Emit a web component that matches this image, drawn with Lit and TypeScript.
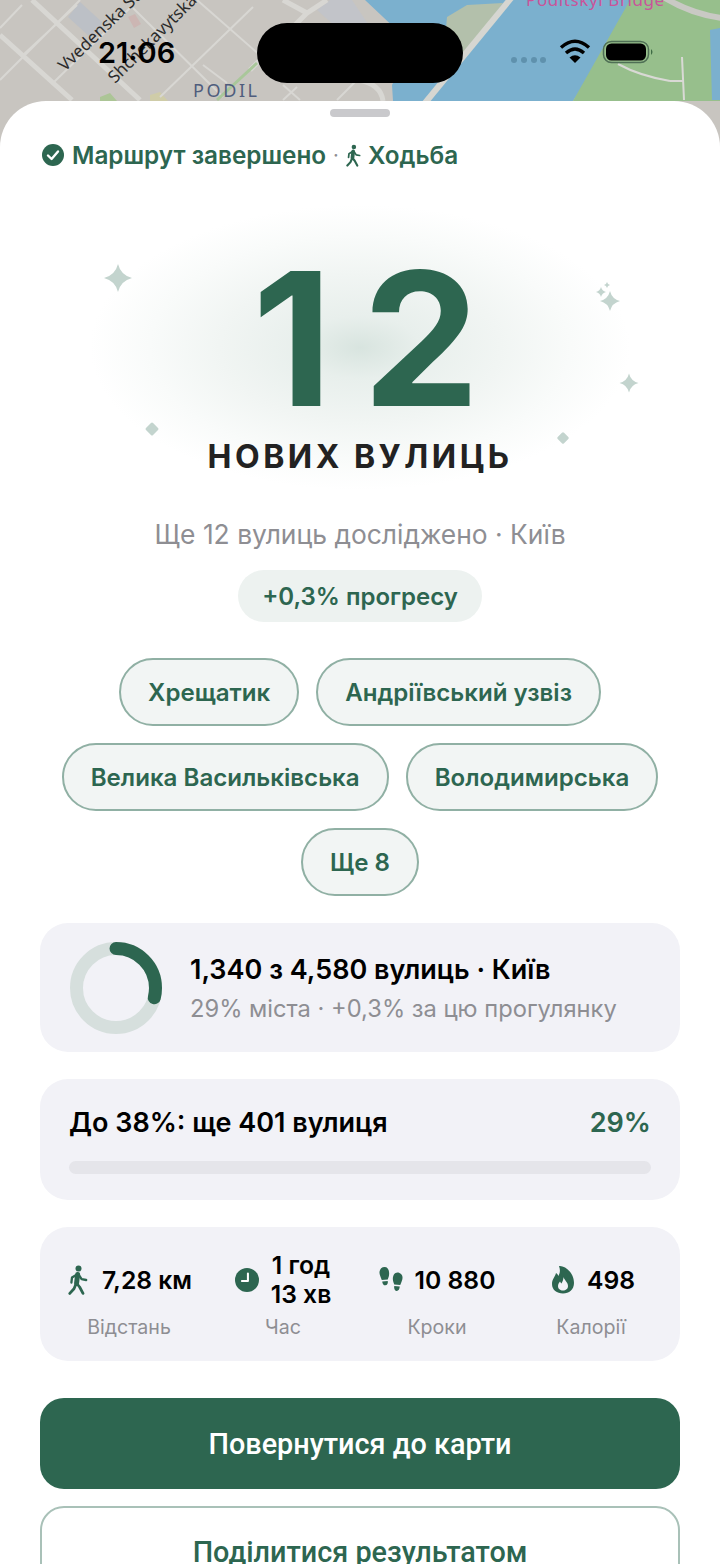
import {LitElement, html, css, svg} from 'lit';
import {customElement} from 'lit/decorators.js';

const GREEN = '#2d6650';

const sparkle = (x: number, y: number, r: number) => {
    const a = r * 0.2;
    return svg`<path d="M${x} ${y - r}Q${x + a} ${y - a} ${x + r} ${y}Q${x + a} ${y + a} ${x} ${y + r}Q${x - a} ${y + a} ${x - r} ${y}Q${x - a} ${y - a} ${x} ${y - r}Z"/>`;
};

const walkIcon = (cls: string) => html`
    <svg class=${cls} viewBox="0 0 20 30" fill="none" stroke=${GREEN} stroke-linecap="round" stroke-linejoin="round">
        <circle cx="10.5" cy="3.6" r="3" fill=${GREEN} stroke="none"/>
        <path d="M9.6 9.5 8.6 18" stroke-width="5"/>
        <path d="M8.2 10 4 12.6 3.4 17.5M11 10.2l2.6 4 4.6 .8" stroke-width="2.3"/>
        <path d="M8.4 18 11.6 22 15 28.4M8 19 6 23.8 1.8 28.4" stroke-width="2.8"/>
    </svg>`;

@customElement('app-root')
export class AppRoot extends LitElement {
    static styles = css`
        :host {
            display: block;
            font-family: Inter, "Noto Sans", sans-serif;
            --green: #2d6650;
        }
        .page {
            position: relative;
            width: 720px;
            height: 1564px;
            overflow: hidden;
            background: #fff;
        }
        .map {
            position: absolute;
            left: 0;
            top: 0;
            width: 720px;
            height: 150px;
        }
        .status {
            position: absolute;
            left: 0;
            top: 0;
            width: 720px;
            height: 100px;
        }
        .time {
            position: absolute;
            left: 98px;
            top: 36px;
            font-size: 29px;
            line-height: 34px;
            font-weight: 600;
            color: #000;
        }
        .island {
            position: absolute;
            left: 257px;
            top: 23px;
            width: 206px;
            height: 60px;
            border-radius: 30px;
            background: #000;
        }
        .status-icons {
            position: absolute;
            left: 508px;
            top: 38px;
        }
        .sheet {
            position: absolute;
            left: 0;
            top: 101px;
            width: 720px;
            height: 1463px;
            box-sizing: border-box;
            background: #fff;
            border-radius: 46px 46px 0 0;
            padding: 8px 40px 0;
            display: flex;
            flex-direction: column;
        }
        .handle {
            align-self: center;
            flex: none;
            width: 60px;
            height: 8px;
            border-radius: 4px;
            background: #c9c9cc;
        }
        .route {
            margin-top: 22px;
            height: 32px;
            flex: none;
            display: flex;
            align-items: center;
            font-size: 24.3px;
            font-weight: 600;
            color: var(--green);
            white-space: nowrap;
        }
        .check {
            width: 22px;
            height: 22px;
            margin: 0 8px 0 2px;
        }
        .sep {
            margin: 0 7px;
            color: #8e8e93;
            font-weight: 400;
            font-size: 20px;
        }
        .walk-small {
            width: 15px;
            height: 23px;
            margin-right: 7px;
            stroke-width: 1;
        }
        .hero {
            position: relative;
            height: 274px;
            flex: none;
            margin: 44px -40px 0;
            display: flex;
            flex-direction: column;
            align-items: center;
        }
        .glow {
            position: absolute;
            left: 90px;
            top: -10px;
            width: 540px;
            height: 285px;
            background: radial-gradient(closest-side, #d8e4df 0%, #e8efec 22%, #f1f5f3 52%, #f9fbfa 78%, #fff 100%);
        }
        .sparkles {
            position: absolute;
            left: 0;
            top: 0;
            width: 720px;
            height: 274px;
            fill: #c3d4ce;
        }
        .count {
            position: relative;
            margin: 31px -42px 0 0;
            font-size: 186px;
            line-height: 186px;
            font-weight: 700;
            letter-spacing: 30px;
            color: var(--green);
        }
        .count-label {
            position: relative;
            margin-top: 5px;
            font-size: 32px;
            line-height: 40px;
            font-weight: 700;
            letter-spacing: 3.5px;
            color: #222;
        }
        .summary {
            margin-top: 29px;
            flex: none;
            text-align: center;
            font-size: 26.4px;
            line-height: 32px;
            color: #8e8e93;
        }
        .progress-pill {
            align-self: center;
            flex: none;
            margin-top: 20px;
            height: 52px;
            padding: 0 24px;
            display: flex;
            align-items: center;
            border-radius: 26px;
            background: #edf2f0;
            color: var(--green);
            font-size: 24px;
            font-weight: 600;
        }
        .chips {
            margin: 36px -10px 0;
            flex: none;
            display: flex;
            flex-wrap: wrap;
            justify-content: center;
            gap: 17px;
        }
        .chip {
            height: 68px;
            box-sizing: border-box;
            padding: 0 27px;
            display: flex;
            align-items: center;
            border: 2px solid #90b0a4;
            border-radius: 34px;
            background: #f2f5f4;
            color: var(--green);
            font-size: 24.1px;
            font-weight: 600;
        }
        .card {
            background: #f2f2f7;
            border-radius: 28px;
            box-sizing: border-box;
            flex: none;
        }
        .city {
            margin-top: 27px;
            height: 129px;
            padding: 0 30px;
            display: flex;
            align-items: center;
            gap: 28px;
        }
        .ring {
            width: 92px;
            height: 92px;
            flex: none;
        }
        .city-text {
            padding-top: 2px;
        }
        .city-title {
            font-size: 27px;
            line-height: 32px;
            font-weight: 600;
            color: #000;
            white-space: nowrap;
        }
        .city-sub {
            margin-top: 8px;
            font-size: 23.7px;
            line-height: 30px;
            color: #8e8e93;
            white-space: nowrap;
        }
        .next {
            margin-top: 27px;
            height: 121px;
            padding: 27px 29px 0;
        }
        .next-row {
            display: flex;
            justify-content: space-between;
            align-items: center;
            height: 32px;
            font-size: 27px;
            font-weight: 600;
            color: #000;
        }
        .next-pct {
            color: var(--green);
            font-size: 27px;
            font-weight: 600;
        }
        .bar {
            margin-top: 23px;
            height: 13px;
            border-radius: 7px;
            background: #e5e5ea;
        }
        .stats {
            margin-top: 27px;
            height: 134px;
            padding: 0 12px;
            display: grid;
            grid-template-columns: repeat(4, 1fr);
        }
        .stat {
            display: grid;
            grid-template-rows: 60px 32px;
            padding-top: 23px;
            justify-items: center;
            row-gap: 1px;
        }
        .stat-top {
            display: flex;
            align-items: center;
            gap: 12px;
            font-size: 24.7px;
            line-height: 29px;
            font-weight: 600;
            color: #000;
            text-align: center;
            white-space: nowrap;
        }
        .stat:last-child .stat-top {
            margin-left: 4px;
        }
        .stat-icon {
            width: 24px;
            height: 30px;
            flex: none;
            stroke-width: 1.3;
        }
        .stat-label {
            font-size: 19.6px;
            line-height: 32px;
            color: #8e8e93;
        }
        .primary, .secondary {
            height: 91px;
            box-sizing: border-box;
            flex: none;
            display: flex;
            align-items: center;
            justify-content: center;
            border-radius: 24px;
            font-family: Roboto, Inter, sans-serif;
            font-size: 28.8px;
            font-weight: 500;
        }
        .primary {
            margin-top: 37px;
            background: var(--green);
            color: #fff;
        }
        .secondary {
            margin-top: 17px;
            border: 2px solid #a9c1b8;
            color: var(--green);
            background: #fff;
        }
    `;

    streets = ['Хрещатик', 'Андріївський узвіз', 'Велика Васильківська', 'Володимирська', 'Ще 8'];

    renderMap() {
        return html`
        <svg class="map" viewBox="0 0 720 150">
            <rect width="720" height="150" fill="#c8c5c0"/>
            <path d="M68 17 80 2 103 23 90 37Z" fill="#bcc0c6"/>
            <path d="M128 17l7-3 6 10-7 4Z" fill="#ccb6b3"/>
            <path d="M100 97l10-4 7 8H100Z" fill="#acc596"/>
            <path d="M150 95l10-3 8 9H150Z" fill="#cfcca8"/>
            <path d="M317 10 330 0H352L372 30 345 35Z" fill="#c2c4c9"/>
            <g fill="none" stroke="#d8d7d3" stroke-width="2">
                <path d="M0 28 22 5M0 80 80 0M23 55 77 5M53 83 130 8M160 97 253 7"/>
                <path d="M133 8 223 97M197 0 262 57M203 65 227 83"/>
                <path d="M283 85 300 100M283 100 297 87M337 100 357 80"/>
            </g>
            <g fill="none" stroke="#d8d7d3" stroke-width="5">
                <path d="M32 0 140 100M0 35 72 100M283 0 307 13 327 0M307 13 250 70"/>
                <path d="M358 80Q381 84 383 101"/>
            </g>
            <path d="M217 100 257 63" stroke="#a9c79a" stroke-width="3"/>
            <path d="M365 0H640L573 101H393L392 85 410 50 400 33Z" fill="#7bb0ce"/>
            <path d="M447 17 467 5 503 3 463 57 445 40Z" fill="#b3c0ab"/>
            <path d="M512 -3 425 103" stroke="#d6d6d1" stroke-width="6"/>
            <path d="M630 0H720V101H573Z" fill="#97bf8c"/>
            <path d="M710 30 720 28V100H712Z" fill="#7bb0ce"/>
            <path d="M660 -5Q690 14 722 18" fill="none" stroke="#c9c9c4" stroke-width="6"/>
            <path d="M618 64Q640 76 670 81M682 57 684 100M670 81H684" fill="none" stroke="#d9d9d5" stroke-width="2"/>
            <text x="526" y="6" font-size="17" font-family="Noto Sans, sans-serif" fill="#c9549a" letter-spacing=".6">Poditskyi Bridge</text>
            <text x="193" y="97" font-size="18" font-family="Noto Sans, sans-serif" fill="#4f5d7d" letter-spacing="2.6">PODIL</text>
            <text transform="translate(65 72) rotate(-44)" font-size="17" font-family="Noto Sans, sans-serif" fill="#2b2b2b">Vvedenska St</text>
            <text transform="translate(115 84) rotate(-45)" font-size="17" font-family="Noto Sans, sans-serif" fill="#2b2b2b">Shchekavytska</text>
        </svg>`;
    }

    renderStatus() {
        return html`
        <div class="status">
            <div class="time">21:06</div>
            <div class="island"></div>
            <svg class="status-icons" width="150" height="30" viewBox="0 0 150 30">
                <g fill="#5f91ad">
                    <circle cx="6" cy="22" r="3"/><circle cx="16" cy="22" r="3"/>
                    <circle cx="26" cy="22" r="3"/><circle cx="35" cy="22" r="3"/>
                </g>
                <g fill="none" stroke="#000" stroke-width="3.4">
                    <path d="M53 9.500Q67 -3 81 9.500"/>
                    <path d="M58 15Q67 7 76 15"/>
                </g>
                <path d="M67 25 61.500 19.500Q67 15 72.500 19.500Z" fill="#000"/>
                <rect x="95.500" y="3.500" width="45" height="21" rx="8" fill="none" stroke="#4f6f55" stroke-width="1.5"/>
                <rect x="98" y="5.500" width="40" height="17" rx="5.500" fill="#000"/>
                <path d="M143 11q3 3 0 6Z" fill="#3f6b45"/>
            </svg>
        </div>`;
    }

    render() {
        return html`
        <div class="page">
            ${this.renderMap()}
            ${this.renderStatus()}
            <div class="sheet">
                <div class="handle"></div>
                <div class="route">
                    <svg class="check" viewBox="0 0 22 22">
                        <circle cx="11" cy="11" r="11" fill=${GREEN}/>
                        <path d="M6 11.500 9.600 15 16 7.500" fill="none" stroke="#fff" stroke-width="2.4" stroke-linecap="round" stroke-linejoin="round"/>
                    </svg>
                    Маршрут завершено<span class="sep">·</span>${walkIcon('walk-small')}Ходьба
                </div>
                <div class="hero">
                    <div class="glow"></div>
                    <svg class="sparkles" viewBox="0 0 720 274">
                        ${sparkle(118, 63, 14)}
                        ${sparkle(610, 86, 10)}
                        ${sparkle(601, 77, 5)}
                        ${sparkle(607, 70, 3)}
                        ${sparkle(629, 168, 9.5)}
                        <rect x="-5" y="-5" width="10" height="10" rx="1.5" transform="translate(152 214) rotate(45)"/>
                        <rect x="-4.500" y="-4.500" width="9" height="9" rx="1.5" transform="translate(563 223) rotate(45)"/>
                    </svg>
                    <div class="count">12</div>
                    <div class="count-label">НОВИХ ВУЛИЦЬ</div>
                </div>
                <div class="summary">Ще 12 вулиць досліджено · Київ</div>
                <div class="progress-pill">+0,3% прогресу</div>
                <div class="chips">
                    ${this.streets.map(s => html`<div class="chip">${s}</div>`)}
                </div>
                <div class="card city">
                    <svg class="ring" viewBox="0 0 92 92">
                        <circle cx="46" cy="46" r="39.5" fill="none" stroke="#d6dfdd" stroke-width="13"/>
                        <circle cx="46" cy="46" r="39.5" fill="none" stroke=${GREEN} stroke-width="13" stroke-linecap="round"
                            pathLength="100" stroke-dasharray="29 100" transform="rotate(-90 46 46)"/>
                    </svg>
                    <div class="city-text">
                        <div class="city-title">1,340 з 4,580 вулиць · Київ</div>
                        <div class="city-sub">29% міста · +0,3% за цю прогулянку</div>
                    </div>
                </div>
                <div class="card next">
                    <div class="next-row"><span>До 38%: ще 401 вулиця</span><span class="next-pct">29%</span></div>
                    <div class="bar"></div>
                </div>
                <div class="card stats">
                    <div class="stat">
                        <div class="stat-top">${walkIcon('stat-icon')}<span>7,28 км</span></div>
                        <div class="stat-label">Відстань</div>
                    </div>
                    <div class="stat">
                        <div class="stat-top">
                            <svg class="stat-icon" viewBox="0 0 26 30">
                                <circle cx="13" cy="15" r="13" fill=${GREEN}/>
                                <path d="M14 8v8H7.500" fill="none" stroke="#fff" stroke-width="2.2" stroke-linecap="round" stroke-linejoin="round"/>
                            </svg>
                            <span>1 год<br>13 хв</span>
                        </div>
                        <div class="stat-label">Час</div>
                    </div>
                    <div class="stat">
                        <div class="stat-top">
                            <svg class="stat-icon" viewBox="0 0 26 30" fill=${GREEN}>
                                <path d="M6 1C9.500 1 11 4 11 8c0 3-1 5-1.500 6.500L3 15C2 12 .5 9.500.5 7 .5 3.500 3 1 6 1Z"/>
                                <path d="M3.500 16.500 9.500 16c.4 2.500-.6 4.600-2.600 4.800-2 .1-3.200-1.800-3.400-4.300Z"/>
                                <path d="M20 7c3 0 5.500 2.500 5.500 5.500 0 2.500-1.500 5-2.500 8l-6.500-.5C16 18.500 15 16 15 14c0-4 2-7 5-7Z"/>
                                <path d="M16.500 21.500 22.500 22c-.2 2.800-1.500 5-3.500 4.800-2-.2-3-2.500-2.500-5.300Z"/>
                            </svg>
                            <span>10 880</span>
                        </div>
                        <div class="stat-label">Кроки</div>
                    </div>
                    <div class="stat">
                        <div class="stat-top">
                            <svg class="stat-icon" viewBox="0 0 24 30">
                                <path d="M8 1C13 0 23 7 23 18c0 6.500-5 10.500-11 10.500S1 25 1 19c0-5 3-7 4-11 1.500 1 2 2 2.500 3C9 8 9.500 5 8 1Z" fill=${GREEN}/>
                                <path d="M12.500 12c.5 3 4.500 5 4.500 9 0 2.800-2.200 4.500-5 4.500S7 23.800 7 21c0-2 1-3 2-4.500.5 1 1 1.500 1.500 2 1-2 2-4 2-6.500Z" fill="#f2f2f7"/>
                            </svg>
                            <span>498</span>
                        </div>
                        <div class="stat-label">Калорії</div>
                    </div>
                </div>
                <div class="primary">Повернутися до карти</div>
                <div class="secondary">Поділитися результатом</div>
            </div>
        </div>`;
    }
}
